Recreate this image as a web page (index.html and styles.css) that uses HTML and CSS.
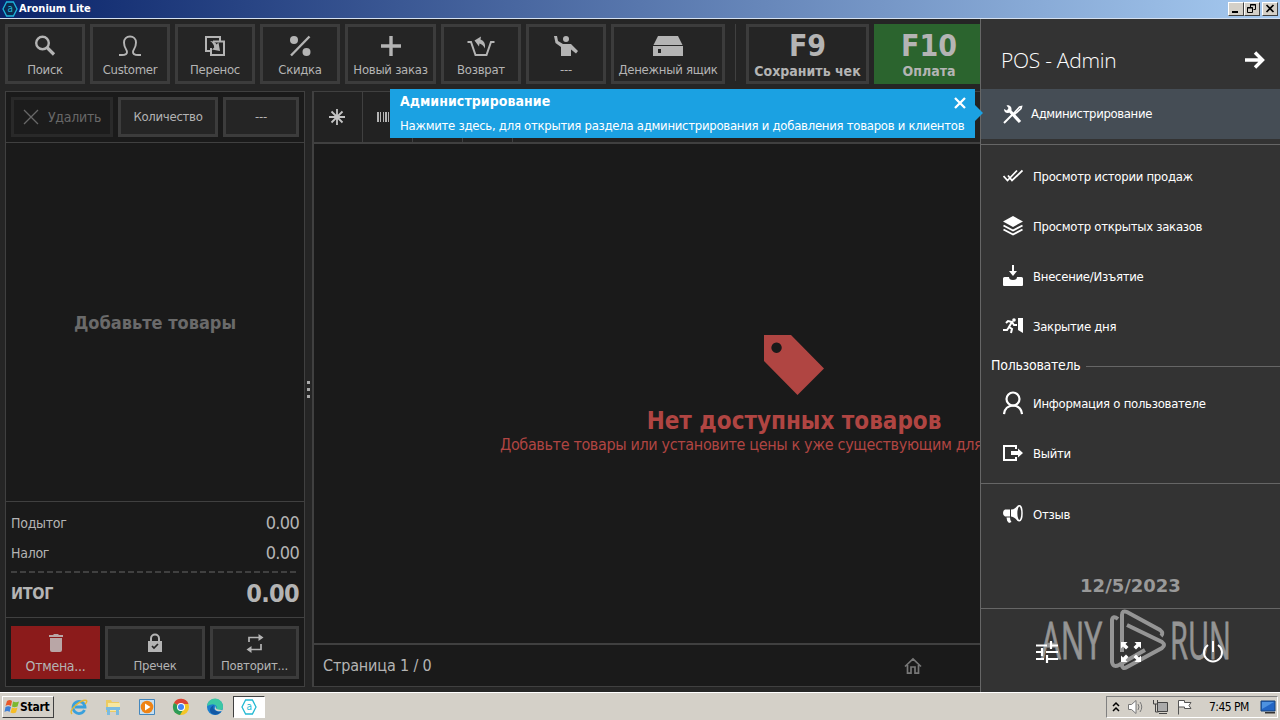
FILE: index.html
```html
<!DOCTYPE html>
<html lang="ru">
<head>
  <meta charset="UTF-8" />
  <title>Aronium Lite</title>
  <link rel="stylesheet" href="styles.css">
</head>
<body>

<!--  TITLE BAR  -->
<header class="titlebar">
  <svg class="logo" width="16" height="16" viewBox="0 0 16 16"><path d="M4.6 1h6.8L15 8l-3.600 7H4.600L1 8z" fill="#0b2a50" stroke="#1fb6dc" stroke-width="1.300"/><text x="8" y="11.400" text-anchor="middle" class="logo-a">a</text></svg>
  <h1>Aronium Lite</h1>
  <div class="win-buttons">
    <span class="win-btn"><svg width="14" height="11"><path d="M3 9h6" stroke="#000" stroke-width="2"/></svg></span>
    <span class="win-btn"><svg width="14" height="11" fill="none" stroke="#000"><path d="M5.500 4V1.500h5v5H8.500M5 2h6M2.500 4.500h5v5h-5zM2 5h6"/></svg></span>
    <span class="win-btn close"><svg width="14" height="11"><path d="M3.500 2l7 7M10.500 2l-7 7" stroke="#000" stroke-width="1.700"/></svg></span>
  </div>
</header>

<main class="app">
  <!--  TOOLBAR  -->
  <nav class="toolbar">
    <div class="tool w80"><svg width="24" height="24" viewBox="0 0 24 24" fill="none" stroke="#b4b4b4"><circle cx="9.500" cy="9" r="6.300" stroke-width="2.400"/><path d="M14 13.500l7 7" stroke-width="3.200"/></svg><span>Поиск</span></div>
    <div class="tool w80"><svg width="24" height="24" viewBox="0 0 24 24" fill="none" stroke="#b4b4b4" stroke-width="1.900"><path d="M1 21h3c3.500 0 5-1.500 5-3 0-2.500-3-4-3-9.500C6 5 8.500 2.500 12 2.500S18 5 18 8.500C18 14 15 15.500 15 18c0 1.500 1.500 3 5 3h3"/></svg><span>Customer</span></div>
    <div class="tool w80"><svg width="24" height="24" viewBox="0 0 24 24" fill="none" stroke="#b4b4b4" stroke-width="2"><path d="M8 17H3V3h14v4M10 7.500h11V21H8v-7"/><path d="M7 7q5 0 6.500 3.500l2-2 1.500 8.500-8-1.500 2.200-2Q11 9.500 7 7z" fill="#b4b4b4" stroke="none"/></svg><span>Перенос</span></div>
    <div class="tool w80"><svg width="24" height="24" viewBox="0 0 24 24"><path d="M21.500 2.500L3 21.500" stroke="#b4b4b4" stroke-width="2.400"/><circle cx="6" cy="6" r="4" fill="#b4b4b4"/><circle cx="18.500" cy="18" r="4" fill="#b4b4b4"/></svg><span>Скидка</span></div>
    <div class="tool w91"><svg width="24" height="24" viewBox="0 0 24 24"><path d="M12 2v20M2 12h20" stroke="#b4b4b4" stroke-width="3.400"/></svg><span>Новый заказ</span></div>
    <div class="tool w80"><svg width="28" height="24" viewBox="0 0 28 24" fill="none" stroke="#b4b4b4" stroke-width="2"><path d="M.500 8H4l4.500 13h11L24 8h3.500"/><path d="M7.500 6.500l6.500-4-.5 3q5.500 2 4.500 9-2-4-5.500-5l-.5 3z" fill="#b4b4b4" stroke="none"/></svg><span>Возврат</span></div>
    <div class="tool w80"><svg width="26" height="24" viewBox="0 0 26 24" fill="#b4b4b4"><circle cx="13" cy="5" r="3"/><path d="M1 2h3l1 5 5 3h8l7 7-2 2.500-5-4V22H8v-9L2.500 9z"/></svg><span>---</span></div>
    <div class="tool w114"><svg width="32" height="24" viewBox="0 0 32 24"><path d="M6 2h20l4.500 9h-29z" fill="#b4b4b4"/><path d="M1 12h30v10H1zM6 15h3v4H6z" fill="#b4b4b4" fill-rule="evenodd"/></svg><span>Денежный ящик</span></div>
    <i class="divider"></i>
    <div class="tool key w123"><b>F9</b><span>Сохранить чек</span></div>
    <div class="tool key pay"><b>F10</b><span>Оплата</span></div>
  </nav>

  <div class="workspace">
    <!--  RECEIPT  -->
    <section class="receipt">
      <div class="receipt-head">
        <div class="btn disabled"><svg width="16" height="16"><path d="M1 1l14 14M15 1L1 15" stroke="#686868" stroke-width="1.300"/></svg><span>Удалить</span></div>
        <div class="btn"><span>Количество</span></div>
        <div class="btn dots">---</div>
      </div>
      <div class="receipt-items"><span>Добавьте товары</span></div>
      <div class="totals">
        <div class="row"><span>Подытог</span><em>0.00</em></div>
        <div class="row"><span>Налог</span><em>0.00</em></div>
        <div class="dash"></div>
        <div class="row total"><span>ИТОГ</span><em>0.00</em></div>
      </div>
      <div class="receipt-foot">
        <div class="tool void"><svg width="20" height="20" viewBox="0 0 20 20" fill="#b9a6a6"><path d="M3 2h4l1-1h4l1 1h4v2H3zM4 5h12v12q0 2-2 2H6q-2 0-2-2z"/></svg><span>Отмена...</span></div>
        <div class="tool lock"><svg width="20" height="20" viewBox="0 0 20 20"><path d="M6 9V5.500a4 4 0 0 1 8 0V9" fill="none" stroke="#b4b4b4" stroke-width="2"/><path d="M3 8h14v11H3z" fill="#b4b4b4"/><path d="M7 13l2 2 4-4" fill="none" stroke="#252525" stroke-width="1.700"/></svg><span>Пречек</span></div>
        <div class="tool repeat"><svg width="20" height="20" viewBox="0 0 20 20" fill="none" stroke="#b4b4b4" stroke-width="1.700"><path d="M4 9V4.500h11M16 11v5.500H4"/><path d="M13.500 1l5 3.500-5 3.500zM6.500 13l-5 3.500 5 3.500z" fill="#b4b4b4" stroke="none"/></svg><span>Повторит...</span></div>
      </div>
    </section>

    <div class="splitter"><i></i><i></i><i></i></div>

    <!--  PRODUCTS  -->
    <section class="products">
      <div class="tabs">
        <div class="tab"><svg width="18" height="18" viewBox="0 0 18 18"><path d="M9 1v16M1 9h16M3.500 3.500l11 11M14.500 3.500l-11 11" stroke="#c4c4c4" stroke-width="1.800"/></svg></div>
        <div class="tab"><svg width="24" height="12" fill="#b4b4b4"><path d="M1 1h2v10H1zM4 1h1v10H4zM7 1h1v10H7zM9 1h2v10H9zM12 1h1v10h-1zM15 1h2v10h-2zM19 1h3v10h-3z"/></svg></div>
        <div class="tab"></div>
        <div class="tab"></div>
      </div>
      <div class="empty">
        <svg width="60" height="60" viewBox="0 0 60 60" fill="#b04542"><path fill-rule="evenodd" d="M0 0h27l33 33.500L33.500 60 0 26zM12.500 7.500a5.200 5.200 0 1 0 .1 0z"/></svg>
        <h2>Нет доступных товаров</h2>
        <p>Добавьте товары или установите цены к уже существующим для</p>
      </div>
      <div class="pager">
        <span>Страница 1 / 0</span>
        <svg width="18" height="18" viewBox="0 0 18 18" fill="none" stroke="#777" stroke-width="1.700"><path d="M1 9.500L9 2l8 7.500M3.500 8v8.200H7V10h4v6.200h3.500V8"/></svg>
      </div>
    </section>
  </div>

  <!--  SIDE MENU  -->
  <aside class="menu">
    <div class="menu-head"><h2>POS - Admin</h2><svg width="20" height="18" viewBox="0 0 20 18" fill="none" stroke="#fff" stroke-width="3.400"><path d="M0 9h17M10 1.500L17.500 9 10 16.500"/></svg></div>
    <div class="item active"><svg width="20" height="20" viewBox="0 0 20 20" fill="none" stroke="#fff"><path d="M1 19l8.500-8.500" stroke-width="2"/><path d="M11 9l5.500-6 2-.5-.5 2-6 5.500z" stroke-width="1.600"/><path d="M6 6l11 12" stroke-width="3.200"/><path d="M3.500 1.500l2 2.500L4 6.500 1 5c0 3 2 4.500 4.500 4L8.500 6C9 3 6.500.500 3.500 1.500z" fill="#fff" stroke="none"/></svg><span>Администрирование</span></div>
    <hr class="after-admin">
    <div class="item"><svg width="20" height="20" viewBox="0 0 20 20" fill="none" stroke="#fff" stroke-width="1.800"><path d="M.5 10l4 4.500 9.500-10M5 9.500l4 5L19.500 4.500"/></svg><span>Просмотр истории продаж</span></div>
    <div class="item"><svg width="20" height="20" viewBox="0 0 20 20"><path d="M10 0l10 5.500L10 11 0 5.500z" fill="#fff"/><path d="M.5 9.500L10 14.500l9.500-5M.5 13.500L10 18.500l9.500-5" fill="none" stroke="#fff" stroke-width="1.900"/></svg><span>Просмотр открытых заказов</span></div>
    <div class="item"><svg width="20" height="22" viewBox="0 0 20 22" fill="#fff"><path d="M9 0h2v6h3l-4 5-4-5h3zM1.500 12H6q0 3 4 3t4-3h4.500q1.500 0 1.500 1.500V20q0 1-1 1H1q-1 0-1-1v-6.500Q0 12 1.500 12z"/></svg><span>Внесение/Изъятие</span></div>
    <div class="item"><svg width="20" height="18" viewBox="0 0 20 18"><circle cx="11" cy="3" r="1.800" fill="#fff"/><path d="M3 6l2-2 4 1-3 5 3 2-1 4M6 10l-2 3H0M9 5l2 3h3" fill="none" stroke="#fff" stroke-width="2"/><path d="M15 1h5v15l-5-3z" fill="#fff"/></svg><span>Закрытие дня</span></div>
    <div class="group"><span>Пользователь</span></div>
    <div class="item"><svg width="20" height="24" viewBox="0 0 20 24" fill="none" stroke="#fff" stroke-width="2.200"><circle cx="10" cy="8" r="6.500"/><path d="M1 23q1-8 9-8.500 8 .5 9 8.500"/></svg><span>Информация о пользователе</span></div>
    <div class="item"><svg width="20" height="16" viewBox="0 0 20 16"><path d="M13 4V1H1v14h12v-3" fill="none" stroke="#fff" stroke-width="2"/><path d="M8 6h7V3.500L20 8l-5 4.500V10H8z" fill="#fff"/></svg><span>Выйти</span></div>
    <hr>
    <div class="item"><svg width="20" height="20" viewBox="0 0 20 20"><path d="M2 5.500h5v7H2Q0 12 0 9t2-3.500zM8 5.500q4 0 6.500-4-2 8 0 15.500Q12 13 8 12.500zM3.500 13.500H7q0 3 1.500 4.500L6 19q-2.500-2-2.500-5.500z" fill="#fff"/><ellipse cx="16.300" cy="9.300" rx="2.700" ry="7.500" fill="none" stroke="#fff" stroke-width="1.500"/></svg><span>Отзыв</span></div>
    <div class="date">12/5/2023</div>
    <div class="menu-foot">
      <svg width="24" height="22" viewBox="0 0 24 22" fill="none" stroke="#fff" stroke-width="2.200"><path d="M1 4.500h11M16 4.500h7M16 0v8M1 11h6M7 7v8M11 11h12M1 18h8M13 18h10M12 14v8"/></svg>
      <svg width="22" height="22" viewBox="0 0 22 22" fill="#fff"><path d="M1 1h6.500L5.500 3l3 3L6 8.500l-3-3-2 2zM21 1v6.500l-2-2-3 3L13.500 6l3-3-2-2zM1 21v-6.500l2 2 3-3L8.500 16l-3 3 2 2zM21 21h-6.500l2-2-3-3 2.500-2.500 3 3 2-2z"/></svg>
      <svg width="22" height="22" viewBox="0 0 22 22" fill="none" stroke="#fff" stroke-width="2"><path d="M6 4a9 9 0 1 0 10 0M11 0v11"/></svg>
    </div>
  </aside>

  <!--  HINT  -->
  <div class="hint">
    <div class="hint-top"><b>Администрирование</b><svg width="12" height="12"><path d="M1 1l10 10M11 1L1 11" stroke="#fff" stroke-width="2.300"/></svg></div>
    <p>Нажмите здесь, для открытия раздела администрирования и добавления товаров и клиентов</p>
  </div>
</main>

<!--  TASKBAR  -->
<footer class="taskbar">
  <div class="start"><svg width="16" height="16" viewBox="0 0 16 16"><path d="M3 2q3-2 5 0L7 7Q4 5 1.500 7z" fill="#e8582a"/><path d="M9 2.500q3 1.500 6 0L13.500 7.500Q10 9 8 7.500z" fill="#7cb82f"/><path d="M1.500 8q3-1.500 5.500 0l-1.500 5q-2-2-5 0z" fill="#3d7fd6"/><path d="M8 8.500q3 1.500 5.500 0L12 13.500q-3 1.500-5.500 0z" fill="#f6bd25"/></svg><span>Start</span></div>
  <div class="pins">
    <svg width="18" height="18" viewBox="0 0 18 18" fill="none"><path d="M14.500 12a6 6 0 1 1 .5-3H5" stroke="#39a0dc" stroke-width="2.800"/><path d="M2 16Q-1 13 6 7T16.500 2.500Q17.500 4 15 6" stroke="#e7b832" stroke-width="1.400"/></svg>
    <svg width="18" height="18" viewBox="0 0 18 18"><path d="M2 2h5l1 2h7v10H2z" fill="#eccb62"/><path d="M4 5h12v8H4z" fill="#f7e7a0"/><path d="M2 9h14v3H2zM3 11h3v6H3zM12 11h3v6h-3z" fill="#7bbbe0"/></svg>
    <svg width="18" height="18" viewBox="0 0 18 18"><path d="M1.500 1.500h15v15h-15z" fill="#c6dff2" stroke="#4487bd"/><circle cx="9" cy="9" r="6.300" fill="#ee8315"/><path d="M7 5.500l5.500 3.500L7 12.500z" fill="#fff"/></svg>
    <svg width="18" height="18" viewBox="0 0 18 18"><circle cx="9" cy="9" r="8" fill="#f4c627"/><path d="M9 9L2 5a8 8 0 0 1 14.500 1H9z" fill="#db4437"/><path d="M9 9v0L2 5a8 8 0 0 0 6 12l3.500-6z" fill="#2c9b57"/><circle cx="9" cy="9" r="4" fill="#fff"/><circle cx="9" cy="9" r="3" fill="#4285f4"/></svg>
    <svg width="18" height="18" viewBox="0 0 18 18"><circle cx="9" cy="9" r="8" fill="#1c7fce"/><path d="M1 8a8 8 0 0 1 16 1q0 4-5 3-3-1-1-3Q9 4 1 8z" fill="#3cc7a4"/><path d="M8 7q-3 6 7 7-5 5-10 1-3-5 3-8z" fill="#1258a5"/><path d="M10 7.500q-2 4 5 4.500l2 0q-2 2-6 1-4-2-1-5.500z" fill="#d4d0c8"/></svg>
  </div>
  <div class="task-active"><svg width="16" height="16" viewBox="0 0 16 16"><path d="M4.600 1h6.800L15 8l-3.600 7H4.600L1 8z" fill="#fff" stroke="#23b9d3" stroke-width="1.300"/><text x="8" y="11.400" text-anchor="middle" class="logo-a">a</text></svg></div>
  <div class="tray">
    <svg width="8" height="12" fill="none" stroke="#000" stroke-width="1.500"><path d="M1 5l3-3 3 3M1 10l3-3 3 3"/></svg>
    <svg width="18" height="16" viewBox="0 0 18 16" fill="none" stroke="#777"><path d="M1.500 5.500h3L9 1.500v13l-4.500-4h-3z" fill="#fff"/><path d="M11 5q2 3 0 6M13 3q3.500 5 0 10"/></svg>
    <svg width="17" height="16" viewBox="0 0 17 16" fill="none" stroke="#444"><path d="M5.500 3.500h10v9h-10z" fill="#aaa"/><path d="M1.500 1v4h4V1M3.500 5v8h3M7 14.500h8" /></svg>
    <svg width="17" height="16" viewBox="0 0 17 16" fill="#fff" stroke="#555"><path d="M2.500 15.500v-14h6v2h6.500l-2 3 2 3H8.500v-1.500h-6"/></svg>
    <span class="clock">7:45 PM</span>
    <svg width="16" height="14" viewBox="0 0 16 14"><path d="M1 1h14v10H1z" fill="#2265c4" stroke="#174379"/><path d="M2 2h12L2 9z" fill="#4e92e0"/><path d="M5 12h10v1.500H5z" fill="#333"/></svg>
  </div>
</footer>

<!--  WATERMARK  -->
<svg class="watermark" width="210" height="90" viewBox="0 0 210 90">
  <text x="3" y="61" textLength="61" lengthAdjust="spacingAndGlyphs">ANY</text>
  <path d="M80 21q-5-4-6 1v42q1 6 7 3l26-15M84 54V17q0-5 5-3l33 18q4 3 1 6M89 27l35 17q4 3 0 6L89 69q-5 3-5-3"/>
  <text x="132" y="61" textLength="61" lengthAdjust="spacingAndGlyphs">RUN</text>
</svg>

</body>
</html>
```
FILE: styles.css
```css
/* ----------  GLOBAL  ---------- */
*{box-sizing:border-box}
html,body{margin:0;padding:0}
body{width:1280px;height:720px;overflow:hidden;display:flex;flex-direction:column;background:#252525;color:#b4b4b4;font-family:"DejaVu Sans Condensed","DejaVu Sans",sans-serif;font-stretch:condensed;font-size:13px;line-height:16px;letter-spacing:-.27px;white-space:nowrap}
h1,h2,p{margin:0}
svg{display:block;flex:none}
em{font-style:normal}

/* ----------  TITLE BAR  ---------- */
.titlebar{height:19px;flex:none;display:flex;align-items:center;padding:0 2px;background:linear-gradient(90deg,#0a246a,#a6caf0);border-bottom:1px solid #d4e0f0;color:#fff}
.titlebar h1{font-size:11px;margin-left:1px;letter-spacing:0}
.logo-a{font-size:10px;fill:#23b9d3}
.win-buttons{display:flex;margin-left:auto}
.win-btn{width:16px;height:14px;background:#d4d0c8;border:1px solid;border-color:#fff #404040 #404040 #fff}
.win-btn.close{margin-left:2px}

/* ----------  TOOLBAR  ---------- */
.app{position:relative;height:673px;flex:none;overflow:hidden;display:flex;flex-direction:column}
.toolbar{display:flex;gap:5px;padding:5px 5px 0;height:72px;flex:none}
.tool{height:60px;flex:none;border:3px solid #3c3c3c;background:#252525;display:flex;flex-direction:column;align-items:center;padding-top:7px}
.tool span{margin-top:4px}
.w80{width:80px}
.w91{width:91px}
.w114{width:114px}
.w123{width:123px}
.divider{width:1px;height:57px;background:#404040;margin:0 5px 0 5px}
.key{padding-top:5px;font-weight:bold;letter-spacing:0}
.key b{font-size:30px;line-height:28px}
.key span{font-size:14px;margin-top:3px}
.pay{width:110px;background:#2b642e;border-color:#2b642e}

/* ----------  RECEIPT  ---------- */
.workspace{display:flex;height:596px;padding-left:5px}
.receipt{width:300px;border:1px solid #404040;background:#1a1a1a;display:flex;flex-direction:column}
.receipt-head{display:flex;gap:5px;padding:5px;height:51px;border-bottom:1px solid #404040}
.btn{height:40px;width:100px;border:3px solid #3c3c3c;background:#252525;display:flex;align-items:center;justify-content:center;gap:9px}
.disabled{width:102px;background:#1c1c1c;border-color:#292929;color:#686868;font-size:14px}
.btn.dots{width:76px}
.receipt-items{height:359px;padding-top:2px;border-bottom:1px solid #404040;display:flex;align-items:center;justify-content:center;font-size:18px;font-weight:bold;letter-spacing:0;color:#6a6a6a}
.totals{height:116px;padding:6px 5px;border-bottom:1px solid #404040}
.row{height:30px;display:flex;align-items:center;justify-content:space-between;font-size:14px}
.row em{font-size:18px;letter-spacing:-.7px}
.dash{height:2px;margin:3px 2px 0 0;background:repeating-linear-gradient(90deg,#404040 0 6px,transparent 6px 9px)}
.total{height:42px;font-weight:bold;font-size:16px}
.total em{font-size:25px}
.receipt-foot{display:flex;justify-content:space-between;padding:8px 5px 0}
.receipt-foot .tool{height:53px;padding-top:4px}
.receipt-foot .tool span{margin-top:5px}
.receipt-foot .void{width:89px;background:#8b1b1b;border-color:#8b1b1b;font-size:14px}
.receipt-foot .lock{width:100px}
.receipt-foot .repeat{width:89px}
.splitter{width:7px;display:flex;flex-direction:column;align-items:center;justify-content:center;gap:4px}
.splitter i{width:3px;height:3px;background:#aaa}

/* ----------  PRODUCTS  ---------- */
.products{width:963px;border:1px solid #404040;border-left-width:2px;background:#1a1a1a;display:flex;flex-direction:column}
.tabs{height:52px;display:flex;background:#222;border-bottom:2px solid #404040}
.tab{width:50px;border-right:1px solid #404040;display:flex;align-items:center;justify-content:center}
.tab:first-child{width:49px;padding-right:2px}
.empty{height:502px;display:flex;flex-direction:column;align-items:center;padding-top:191px;border-bottom:2px solid #404040;color:#b04542}
.empty h2{font-size:24px;line-height:30px;margin-top:11px;letter-spacing:0}
.empty p{width:588px;font-size:16px;line-height:18px;letter-spacing:-.35px}
.pager{height:41px;width:608px;display:flex;align-items:center;justify-content:space-between;padding:1px 0 0 9px;font-size:16px;letter-spacing:-.15px}

/* ----------  SIDE MENU  ---------- */
.menu{position:absolute;top:0;right:0;width:300px;height:673px;background:#333;border-left:1px solid #666;color:#fff}
.menu-head{height:70px;padding:11px 15px 0 20px;display:flex;align-items:center;justify-content:space-between}
.menu h2{font:300 21px/28px "Open Sans",sans-serif}
.item{height:50px;padding-left:22px;display:flex;align-items:center;gap:10px}
.item span{padding-top:1px}
.active{background:#454d55;gap:8px}
.active span{padding-top:0;letter-spacing:-.36px}
.menu hr{border:0;height:1px;background:#666;margin:5px 0}
.menu .after-admin{margin-bottom:6px}
.group{height:27px;padding-left:10px;display:flex;align-items:center;gap:5px;font-size:14px}
.group:after{content:"";height:1px;flex:1;background:#666;margin-top:3px}
.date{height:70px;padding-top:39px;text-align:center;font-family:"DejaVu Sans",sans-serif;font-stretch:normal;font-size:18px;font-weight:bold;letter-spacing:0;color:#999;border-bottom:1px solid #666}
.menu-foot{height:84px;padding:2px 56px 0 54px;display:flex;align-items:center;justify-content:space-between}

/* ----------  HINT  ---------- */
.hint{position:absolute;left:390px;top:70px;width:585px;height:49px;padding:4px 9px 0 10px;background:#1ba1e2;color:#fff}
.hint:after{content:"";position:absolute;right:-8px;top:16px;border:8px solid transparent;border-right-width:0;border-left-color:#1ba1e2}
.hint-top{display:flex;justify-content:space-between}
.hint-top b{font-size:14px;letter-spacing:.05px}
.hint-top svg{margin-top:4px}
.hint p{margin-top:9px}

/* ----------  TASKBAR  ---------- */
.taskbar{height:28px;flex:none;display:flex;align-items:center;padding:1px 2px 0;background:#d4d0c8;border-top:1px solid #fff;color:#000}
.start{width:52px;height:22px;display:flex;align-items:center;padding-left:1px;font-weight:bold;font-size:12px;border:1px solid;border-color:#fff #404040 #404040 #fff}
.pins{display:flex;gap:16px;padding-left:16px}
.task-active{width:32px;height:22px;margin-left:9px;background:#fff;border:1px solid;border-color:#404040 #fff #fff #404040;display:flex;align-items:center;justify-content:center}
.tray{width:172px;height:22px;margin-left:auto;display:flex;align-items:center;border:1px solid;border-color:#808080 #fff #fff #808080;padding-left:5px;gap:7px;font-size:12px}
.clock{margin-left:9px;letter-spacing:-.55px}
.tray svg:last-child{margin-left:4px}

/* ----------  WATERMARK  ---------- */
.watermark{position:absolute;left:1038px;top:598px;opacity:.48;pointer-events:none}
.watermark text{font:400 51px "Open Sans",sans-serif;letter-spacing:0;fill:#fff;stroke:#fff;stroke-width:.8px}
.watermark path{fill:none;stroke:#fff;stroke-width:4}
```
